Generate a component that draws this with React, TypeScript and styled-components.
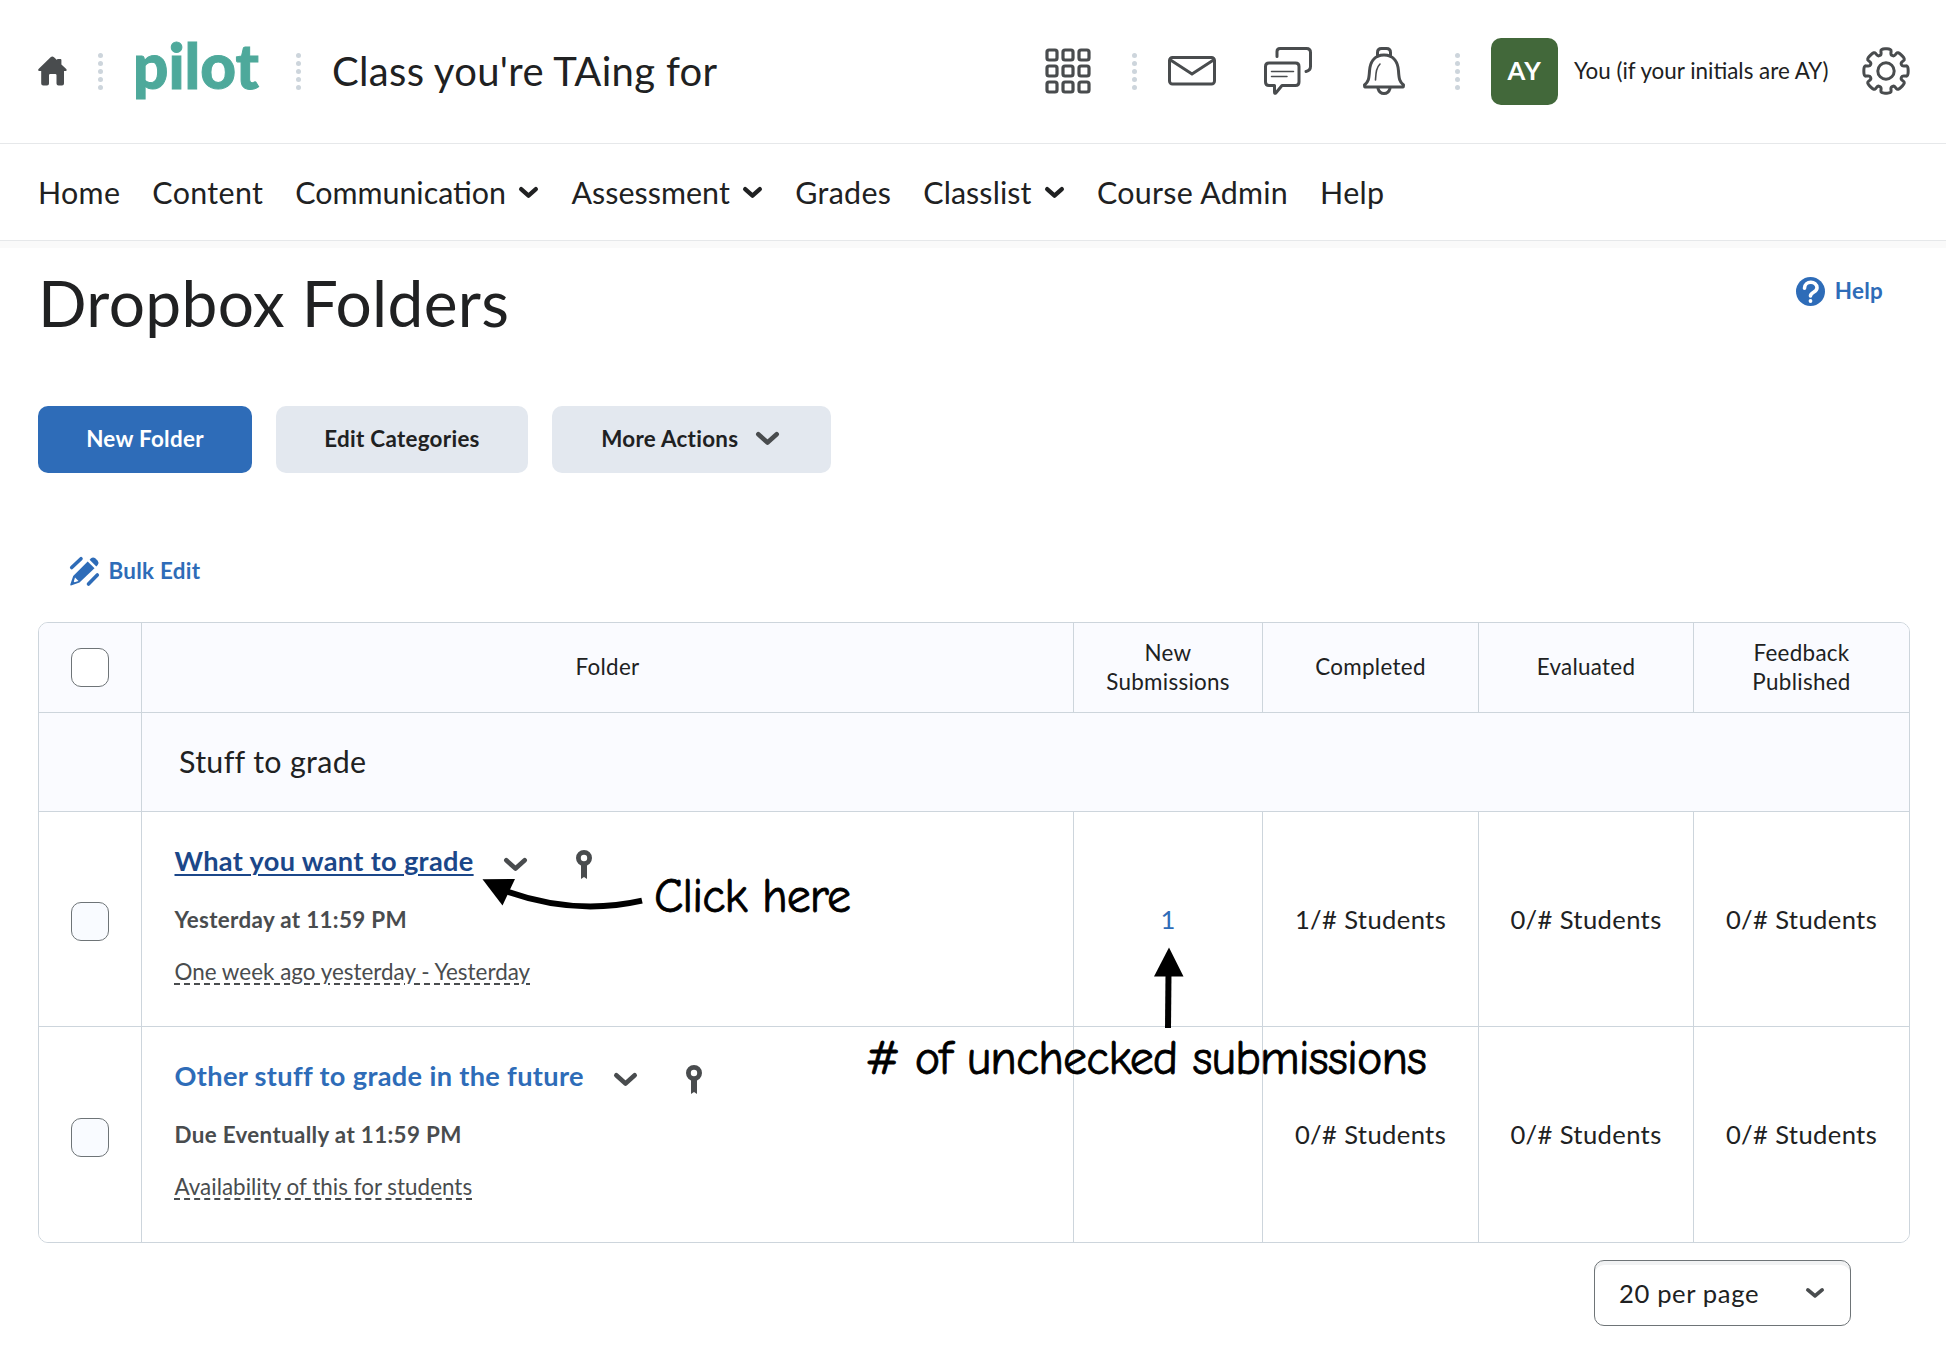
import React from "react";
import styled, { createGlobalStyle, css } from "styled-components";

const ink = "#202122";
const grey = "#494c4e";
const blue = "#2e6cb8";
const line = "#cdd5dc";
const tint = "#fafbff";

const GlobalStyle = createGlobalStyle`
  * { box-sizing: border-box; }
  body {
    margin: 0;
    background: #fff;
    color: ${ink};
    font-family: Lato, "Open Sans", sans-serif;
    font-size: 22.4px;
  }
  svg { display: block; flex: none; overflow: visible; }
`;

const Page = styled.div`
  width: 1946px;
  height: 1345px;
  overflow: hidden;
  background: #fff;
`;

const Header = styled.header`
  display: flex;
  align-items: center;
  height: 144px;
  padding: 0 36px 1px 38px;
  border-bottom: 1px solid #e6e8ea;
`;

const HeaderSide = styled.div<{ $end?: boolean }>`
  display: flex;
  align-items: center;
  height: 100%;
  ${(p) => p.$end && css`margin-left: auto;`}
`;

const Dots = styled.span<{ $left: number; $right: number }>`
  display: grid;
  gap: 3px;
  margin: 0 ${(p) => p.$right}px 0 ${(p) => p.$left}px;
  i {
    width: 5px;
    height: 5px;
    border-radius: 50%;
    background: ${line};
  }
`;

const Logo = styled.span`
  width: 126px;
  color: #4ea99b;
  font-size: 62px;
  font-weight: 900;
  line-height: 60px;
  letter-spacing: 0;
  white-space: nowrap;
  margin-top: -13px;
  -webkit-text-stroke: 1px #4ea99b;
`;

const CourseName = styled.span`
  font-size: 40px;
  letter-spacing: 0.32px;
  white-space: nowrap;
`;

const IconGroup = styled.div`
  display: flex;
  gap: 48px;
`;

const Avatar = styled.span`
  display: grid;
  place-items: center;
  width: 67px;
  height: 67px;
  padding-bottom: 2px;
  border-radius: 10px;
  background: #42683a;
  color: #fff;
  font-size: 25.6px;
  font-weight: 700;
  letter-spacing: 0.9px;
`;

const UserName = styled.span`
  width: 256px;
  margin: 0 32px 0 16px;
  padding-bottom: 2px;
  white-space: nowrap;
`;

const Nav = styled.nav`
  display: flex;
  align-items: center;
  gap: 32px;
  height: 97px;
  padding-left: 38px;
  border-bottom: 1px solid #e6e8ea;
`;

const NavItem = styled.span<{ $track: number }>`
  display: flex;
  align-items: center;
  gap: 13px;
  font-size: 30.4px;
  letter-spacing: ${(p) => p.$track}px;
  white-space: nowrap;
  svg { margin-right: 1.5px; }
`;

const NavShade = styled.div`
  height: 7px;
  background: #fafafa;
`;

const Main = styled.main`
  padding: 16px 36px 0 38px;
`;

const TitleRow = styled.div`
  display: flex;
  justify-content: space-between;
  align-items: flex-start;
  height: 142px;
`;

const Title = styled.h1`
  margin: 0;
  padding-top: 1px;
  font-size: 64px;
  font-weight: 400;
  line-height: 76px;
  letter-spacing: 0.33px;
`;

const LinkAction = styled.span`
  display: flex;
  align-items: center;
  gap: 9.5px;
  color: ${blue};
  font-weight: 700;
  line-height: 30px;
  letter-spacing: 0.28px;
`;

const HelpSlot = styled.div`
  padding: 12px 27px 0 0;
`;

const Buttons = styled.div`
  display: flex;
  gap: 24px;
`;

const Button = styled.button<{ $primary?: boolean; $width: number }>`
  display: flex;
  align-items: center;
  justify-content: center;
  gap: 18px;
  width: ${(p) => p.$width}px;
  height: 67px;
  padding: 0 0 2px;
  border: 0;
  border-radius: 10px;
  background: ${(p) => (p.$primary ? blue : "#e3e8ef")};
  color: ${(p) => (p.$primary ? "#fff" : ink)};
  font: 700 22.4px Lato, sans-serif;
  letter-spacing: 0.29px;
  svg { margin-right: 2.5px; }
`;

const BulkBar = styled.div`
  padding: 83px 0 0 32px;
  height: 149px;
`;

const Table = styled.section`
  position: relative;
  width: 1872px;
  border: 1px solid ${line};
  border-radius: 10px;
  overflow: hidden;
`;

const Row = styled.div<{ $height: number; $tint?: boolean; $group?: boolean }>`
  display: grid;
  grid-template-columns: ${(p) =>
    p.$group ? "103px 1fr" : "103px 932px 189px 216px 215px 215px"};
  height: ${(p) => p.$height}px;
  background: ${(p) => (p.$tint ? tint : "#fff")};
  & + & { border-top: 1px solid ${line}; }
`;

const Cell = styled.div<{ $head?: boolean; $link?: boolean; $lift?: boolean }>`
  display: flex;
  align-items: center;
  justify-content: center;
  text-align: center;
  white-space: pre-line;
  padding-bottom: ${(p) => (p.$head || p.$lift ? 2 : 0)}px;
  font-size: ${(p) => (p.$head ? 22.4 : 25.6)}px;
  line-height: ${(p) => (p.$head ? 29 : 36)}px;
  letter-spacing: ${(p) => (p.$head ? 0.3 : 0.37)}px;
  color: ${(p) => (p.$link ? blue : ink)};
  &:not(:last-child) { border-right: 1px solid ${line}; }
`;

const GroupName = styled.div`
  display: flex;
  align-items: center;
  padding: 0 0 2px 37px;
  font-size: 30.4px;
  letter-spacing: 0.33px;
`;

const Checkbox = styled.span<{ $row?: boolean }>`
  width: 38px;
  height: 39px;
  margin-top: ${(p) => (p.$row ? 5 : 0)}px;
  border: 1px solid #6e7477;
  border-radius: 10px;
  background: ${(p) => (p.$row ? "#f9fbff" : "#fff")};
`;

const FolderCell = styled.div`
  padding: 29px 0 0 32.5px;
  border-right: 1px solid ${line};
`;

const FolderHead = styled.div`
  display: flex;
  align-items: center;
  height: 40px;
  svg { margin-top: 6px; }
`;

const FolderLink = styled.span<{ $active?: boolean }>`
  margin-right: 30.5px;
  color: ${(p) => (p.$active ? "#1b4789" : blue)};
  font-size: 27.2px;
  font-weight: 700;
  line-height: 40px;
  letter-spacing: 0.33px;
  ${(p) =>
    p.$active &&
    css`
      text-decoration: underline;
      text-decoration-thickness: 2px;
      text-underline-offset: 3px;
    `}
`;

const PinSlot = styled.span`
  margin-left: 49px;
`;

const Due = styled.div`
  margin-top: 24px;
  color: ${grey};
  font-weight: 700;
  line-height: 30px;
  letter-spacing: 0.33px;
`;

const Availability = styled.div`
  margin-top: 22px;
  color: ${grey};
  line-height: 30px;
  letter-spacing: 0.02px;
  text-decoration: underline dashed;
  text-decoration-thickness: 2px;
  text-underline-offset: 3px;
`;

const Note = styled.span<{ $x: number; $y: number }>`
  position: absolute;
  left: ${(p) => p.$x}px;
  top: ${(p) => p.$y}px;
  color: #000;
  font-family: "Comic Sans MS", "Comic Neue", cursive, sans-serif;
  font-size: 48px;
  line-height: 56px;
  letter-spacing: -0.9px;
  white-space: nowrap;
  -webkit-text-stroke: 0.8px #000;
`;

const Arrows = styled.svg`
  position: absolute;
  left: 0;
  top: 0;
`;

const Pager = styled.div`
  display: flex;
  justify-content: flex-end;
  padding: 17px 59px 0 0;
`;

const Select = styled.div`
  display: flex;
  align-items: center;
  justify-content: space-between;
  width: 257px;
  height: 66px;
  padding: 0 26px 0 24px;
  border: 1px solid #6e7477;
  border-radius: 10px;
  box-shadow: inset 0 4px 0 #f1f2f3;
  font-size: 25.6px;
  letter-spacing: 0.63px;
`;

const Chevron = ({ w = 23, h = 13, s = 4.6, c = grey }) => (
  <svg width={w} height={h}>
    <path
      d={`M${s / 2} ${s / 2}L${w / 2} ${h - s / 2 - 0.2}L${w - s / 2} ${s / 2}`}
      fill="none"
      stroke={c}
      strokeWidth={s}
      strokeLinecap="round"
      strokeLinejoin="round"
    />
  </svg>
);

const Divider = ({ left, right }: { left: number; right: number }) => (
  <Dots $left={left} $right={right}>
    <i /><i /><i /><i /><i />
  </Dots>
);

const HomeIcon = () => (
  <svg width="29" height="30" viewBox="0 0 29 30" fill={grey}>
    <path d="M12.6 1.2Q14.3-.4 16 1.2L19 4V3.8Q19 3 19.8 3H22.4Q23.4 3 23.4 4V8.4L28 12.8Q29.6 14.6 27.6 15H26V27.5Q26 29.6 24 29.6H20.5Q18.5 29.6 18.5 27.5V19.2Q18.5 18 17.3 18H12.2Q11 18 11 19.2V27.5Q11 29.6 9 29.6H5.2Q3.2 29.6 3.2 27.5V15H1.4Q-.8 14.6 .8 12.8Z" />
  </svg>
);

const GridIcon = () => (
  <svg width="48" height="48" fill="none" stroke={grey} strokeWidth="3.2">
    {[0, 1, 2].map((r) =>
      [0, 1, 2].map((c) => (
        <rect key={`${r}${c}`} x={3 + c * 16} y={3 + r * 16} width="10" height="10" rx="2" />
      ))
    )}
  </svg>
);

const MailIcon = () => (
  <svg width="48" height="48" fill="none" stroke={grey} strokeWidth="3">
    <rect x="1.5" y="10.5" width="45" height="26.5" rx="3" />
    <path d="M2.5 13L24 27L45.5 13" />
  </svg>
);

const ChatIcon = () => (
  <svg width="48" height="48" fill="none" stroke={grey} strokeWidth="3" strokeLinecap="round" strokeLinejoin="round">
    <path d="M13 9.5V4.5Q13 1.5 16 1.5H42.5Q46.5 1.5 46.5 5.5V19.5Q46.5 23.5 42 24.5" />
    <path d="M5 16H31.5Q35 16 35 19.5V35Q35 38.5 31.5 38.5H18L11.8 46Q10.5 47 10.5 45V38.5H5Q1.5 38.5 1.5 35V19.5Q1.5 16 5 16Z" />
    <path d="M7.5 24.5H29.5M7.5 29.5H23" strokeWidth="1.5" />
  </svg>
);

const BellIcon = () => (
  <svg width="48" height="48" fill="none" stroke={grey} strokeWidth="3" strokeLinecap="round" strokeLinejoin="round">
    <path d="M17.5 9V5.5Q17.5 1.5 21.5 1.5H26.5Q30.5 1.5 30.5 5.5V9" />
    <path d="M24 8C13.5 8 10 16.5 9.5 24C9 32 8.5 34.5 4.5 38Q4.5 40 5 40H43Q43.5 40 43.5 38C39.5 34.5 39 32 38.5 24C38 16.5 34.5 8 24 8Z" />
    <path d="M18 41.5Q19.5 46.5 24 46.5T30 41.5" />
    <path d="M20 17C16 21 16 26 15.5 33" strokeWidth="1.6" />
  </svg>
);

const gearOutline = (() => {
  const points: [number, number][] = [];
  for (let k = 0; k < 8; k++) {
    const a = (k * Math.PI) / 4 - Math.PI / 2;
    [[-0.28, 16.8], [-0.24, 22.8], [0.24, 22.8], [0.28, 16.8]].forEach(([d, r]) =>
      points.push([24 + r * Math.cos(a + d), 24 + r * Math.sin(a + d)])
    );
  }
  const mid = (i: number, t: number) => {
    const p = points[i % 32];
    const q = points[(i + 1) % 32];
    return `${(p[0] + (q[0] - p[0]) * t).toFixed(2)} ${(p[1] + (q[1] - p[1]) * t).toFixed(2)}`;
  };
  let d = `M${mid(0, 0.4)}`;
  for (let i = 0; i < 32; i++) {
    const c = points[(i + 1) % 32];
    d += `L${mid(i, 0.6)}Q${c[0].toFixed(2)} ${c[1].toFixed(2)} ${mid(i + 1, 0.4)}`;
  }
  return d + "Z";
})();

const GearIcon = () => (
  <svg width="48" height="48" fill="none" stroke={grey} strokeWidth="3" strokeLinejoin="round">
    <path d={gearOutline} />
    <circle cx="24" cy="24" r="8.2" />
  </svg>
);

const HelpIcon = () => (
  <svg width="29" height="29" viewBox="0 0 29 29">
    <circle cx="14.5" cy="14.5" r="14.5" fill={blue} />
    <path d="M8.5 11.3C8.5 3.4 21 3.4 21 10.8C21 15.5 14.5 15 14.5 19" fill="none" stroke="#fff" strokeWidth="3.6" strokeLinecap="round" />
    <circle cx="14.5" cy="24" r="1.9" fill="#fff" />
  </svg>
);

const BulkIcon = () => (
  <svg width="29" height="29" viewBox="0 0 29 29">
    <path d="M1.7 10.5L11 1.7M18.5 27L27.3 18" stroke={blue} strokeWidth="3.6" strokeLinecap="round" />
    <path d="M17.7 4.5L24.5 11.3L9.5 25.5L1 28.5Q0 28.5 .3 27.5L3.2 19Z" fill={blue} />
    <path d="M19.6 2.7L21 1.3Q23-.5 25.3 1.3L27.7 3.7Q29.5 6 27.7 8L26.3 9.4Z" fill={blue} />
    <path d="M5 20.5L8.5 24L4.5 25.3L3.8 24.5Z" fill="#fff" />
  </svg>
);

const PinIcon = () => (
  <svg width="16" height="29" viewBox="0 0 16 29">
    <circle cx="8" cy="8" r="5.6" fill="none" stroke={grey} strokeWidth="4.8" />
    <path d="M5 14H11V29L8 27L5 29Z" fill={grey} />
  </svg>
);

const navItems: { label: string; track: number; menu?: boolean }[] = [
  { label: "Home", track: 0.32 },
  { label: "Content", track: 0.35 },
  { label: "Communication", track: 0, menu: true },
  { label: "Assessment", track: 0.04, menu: true },
  { label: "Grades", track: 0.3 },
  { label: "Classlist", track: 0.1, menu: true },
  { label: "Course Admin", track: 0.28 },
  { label: "Help", track: 0.35 },
];

const heads = ["Folder", "New\nSubmissions", "Completed", "Evaluated", "Feedback\nPublished"];

const folders = [
  {
    name: "What you want to grade",
    active: true,
    due: "Yesterday at 11:59 PM",
    range: "One week ago yesterday - Yesterday",
    fresh: "1",
    counts: ["1/# Students", "0/# Students", "0/# Students"],
  },
  {
    name: "Other stuff to grade in the future",
    active: false,
    due: "Due Eventually at 11:59 PM",
    range: "Availability of this for students",
    fresh: "",
    counts: ["0/# Students", "0/# Students", "0/# Students"],
  },
];

export default function App() {
  return (
    <Page>
      <GlobalStyle />
      <Header>
        <HeaderSide>
          <HomeIcon />
          <Divider left={31} right={30} />
          <Logo>pilot</Logo>
          <Divider left={37} right={31} />
          <CourseName>Class you're TAing for</CourseName>
        </HeaderSide>
        <HeaderSide $end>
          <GridIcon />
          <Divider left={40} right={31} />
          <IconGroup>
            <MailIcon />
            <ChatIcon />
            <BellIcon />
          </IconGroup>
          <Divider left={47} right={31} />
          <Avatar>AY</Avatar>
          <UserName>You (if your initials are AY)</UserName>
          <GearIcon />
        </HeaderSide>
      </Header>
      <Nav>
        {navItems.map(({ label, track, menu }) => (
          <NavItem key={label} $track={track}>
            {label}
            {menu && <Chevron w={19} h={11} s={4.3} c={ink} />}
          </NavItem>
        ))}
      </Nav>
      <NavShade />
      <Main>
        <TitleRow>
          <Title>Dropbox Folders</Title>
          <HelpSlot>
            <LinkAction>
              <HelpIcon />
              Help
            </LinkAction>
          </HelpSlot>
        </TitleRow>
        <Buttons>
          <Button $primary $width={214}>New Folder</Button>
          <Button $width={252}>Edit Categories</Button>
          <Button $width={279}>
            More Actions
            <Chevron />
          </Button>
        </Buttons>
        <BulkBar>
          <LinkAction>
            <BulkIcon />
            Bulk Edit
          </LinkAction>
        </BulkBar>
        <Table>
          <Row $height={89} $tint>
            <Cell><Checkbox /></Cell>
            {heads.map((h) => (
              <Cell key={h} $head>{h}</Cell>
            ))}
          </Row>
          <Row $height={99} $tint $group>
            <Cell />
            <GroupName>Stuff to grade</GroupName>
          </Row>
          {folders.map((f) => (
            <Row key={f.name} $height={f.active ? 215 : 216}>
              <Cell><Checkbox $row /></Cell>
              <FolderCell>
                <FolderHead>
                  <FolderLink $active={f.active}>{f.name}</FolderLink>
                  <Chevron />
                  <PinSlot><PinIcon /></PinSlot>
                </FolderHead>
                <Due>{f.due}</Due>
                <Availability>{f.range}</Availability>
              </FolderCell>
              <Cell $link>{f.fresh}</Cell>
              {f.counts.map((c, i) => (
                <Cell key={i} $lift={!f.active}>{c}</Cell>
              ))}
            </Row>
          ))}
          <Arrows width="1870" height="619" viewBox="39 623 1870 619">
            <path d="M507 891.5Q575 915.7 642 900.6" fill="none" stroke="#000" strokeWidth="6" />
            <path d="M482.5 879.3L515 879L502.5 905.5Z" />
            <path d="M1168.5 974L1168 1028" stroke="#000" strokeWidth="6" />
            <path d="M1169 947.5L1183.5 976.5H1154Z" />
          </Arrows>
          <Note $x={615} $y={246}>Click here</Note>
          <Note $x={826} $y={408}>{"# of unchecked submissions"}</Note>
        </Table>
        <Pager>
          <Select>
            20 per page
            <Chevron w={18} h={10} s={3.8} />
          </Select>
        </Pager>
      </Main>
    </Page>
  );
}
